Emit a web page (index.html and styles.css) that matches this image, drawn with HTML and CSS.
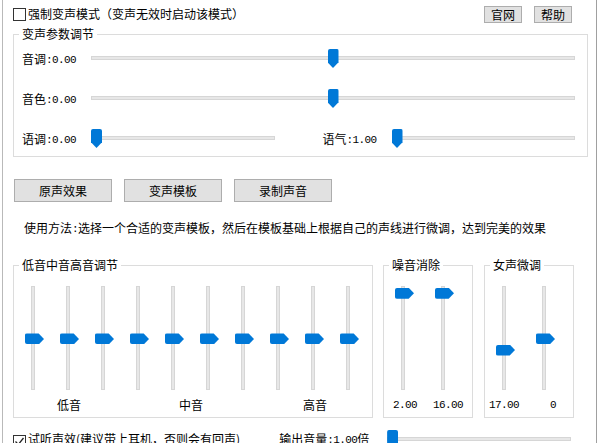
FILE: index.html
```html
<!DOCTYPE html>
<html lang="zh-CN">
<head>
<meta charset="utf-8">
<title>变声器</title>
<link rel="stylesheet" href="styles.css">
</head>
<body>
<div class="frame">
  <div class="toprow">
    <span class="check"></span>
    <span class="linetext">强制变声模式（变声无效时启动该模式）</span>
    <span class="spacer"></span>
    <button class="btn small">官网</button>
    <button class="btn small">帮助</button>
  </div>

  <div class="group params">
    <div class="title">变声参数调节</div>
    <div class="rows">
      <div class="prow">
        <span class="plabel">音调<span class="num">:0.00</span></span>
        <div class="hslider"><div class="htrack"></div><div class="hthumb" style="--v:.5"></div></div>
      </div>
      <div class="prow">
        <span class="plabel">音色<span class="num">:0.00</span></span>
        <div class="hslider"><div class="htrack"></div><div class="hthumb" style="--v:.5"></div></div>
      </div>
      <div class="prow split">
        <div class="half">
          <span class="plabel">语调<span class="num">:0.00</span></span>
          <div class="hslider"><div class="htrack"></div><div class="hthumb" style="--v:0"></div></div>
        </div>
        <div class="half">
          <span class="plabel">语气<span class="num">:1.00</span></span>
          <div class="hslider"><div class="htrack"></div><div class="hthumb" style="--v:0"></div></div>
        </div>
      </div>
    </div>
  </div>

  <div class="actions">
    <button class="btn big">原声效果</button>
    <button class="btn big">变声模板</button>
    <button class="btn big">录制声音</button>
  </div>

  <p class="usage">使用方法<span class="num">:</span>选择一个合适的变声模板，然后在模板基础上根据自己的声线进行微调，达到完美的效果</p>

  <div class="lower">
    <div class="group eq">
      <div class="title">低音中音高音调节</div>
      <div class="vrow">
        <div class="vslider"><div class="vtrack"></div><div class="vthumb" style="--v:.51"></div></div>
        <div class="vslider"><div class="vtrack"></div><div class="vthumb" style="--v:.51"></div></div>
        <div class="vslider"><div class="vtrack"></div><div class="vthumb" style="--v:.51"></div></div>
        <div class="vslider"><div class="vtrack"></div><div class="vthumb" style="--v:.51"></div></div>
        <div class="vslider"><div class="vtrack"></div><div class="vthumb" style="--v:.51"></div></div>
        <div class="vslider"><div class="vtrack"></div><div class="vthumb" style="--v:.51"></div></div>
        <div class="vslider"><div class="vtrack"></div><div class="vthumb" style="--v:.51"></div></div>
        <div class="vslider"><div class="vtrack"></div><div class="vthumb" style="--v:.51"></div></div>
        <div class="vslider"><div class="vtrack"></div><div class="vthumb" style="--v:.51"></div></div>
        <div class="vslider"><div class="vtrack"></div><div class="vthumb" style="--v:.51"></div></div>
      </div>
      <div class="vlabels">
        <span class="eq-low">低音</span>
        <span class="eq-mid">中音</span>
        <span class="eq-high">高音</span>
      </div>
    </div>

    <div class="group small-group noise">
      <div class="title">噪音消除</div>
      <div class="vrow pair">
        <div class="vslider"><div class="vtrack"></div><div class="vthumb" style="--v:.02"></div></div>
        <div class="vslider"><div class="vtrack"></div><div class="vthumb" style="--v:.02"></div></div>
      </div>
      <div class="vlabels">
        <span class="num n-a">2.00</span>
        <span class="num n-b">16.00</span>
      </div>
    </div>

    <div class="group small-group female">
      <div class="title">女声微调</div>
      <div class="vrow pair">
        <div class="vslider"><div class="vtrack"></div><div class="vthumb" style="--v:.63"></div></div>
        <div class="vslider"><div class="vtrack"></div><div class="vthumb" style="--v:.51"></div></div>
      </div>
      <div class="vlabels">
        <span class="num f-a">17.00</span>
        <span class="num f-b">0</span>
      </div>
    </div>
  </div>

  <div class="bottomrow">
    <span class="check checked"><svg viewBox="0 0 11 11" width="11" height="11"><path d="M1.5 5.5 L4.3 8.5 L9.5 2" fill="none" stroke="#222" stroke-width="1.3"/></svg></span>
    <span class="linetext">试听声效(建议带上耳机，否则会有回声)</span>
    <span class="outlabel">输出音量<span class="num">:1.00</span>倍</span>
    <div class="hslider out"><div class="htrack"></div><div class="hthumb" style="--v:0"></div></div>
  </div>
</div>
</body>
</html>
```

FILE: styles.css
```css
* { box-sizing: border-box; }

html, body {
  margin: 0;
  height: 100%;
  overflow: hidden;
  background: #fff;
}

body {
  font-family: "Noto Sans CJK SC", "Noto Sans", sans-serif;
  font-size: 12px;
  line-height: 16px;
  color: #000;
}

.num {
  font-family: "Liberation Mono", "DejaVu Sans Mono", monospace;
  font-size: 11px;
  letter-spacing: -0.6px;
  vertical-align: 1px;
}

.frame {
  margin-left: 2px;
  width: 595px;
  height: 443px;
  border-left: 1px solid #b9b9b9;
  border-right: 1px solid #a0a0a0;
  padding-top: 4px;
}

/* top row */
.toprow {
  display: flex;
  align-items: flex-start;
  height: 20px;
  padding: 0 24px 0 10px;
}

.check {
  flex: none;
  width: 13px;
  height: 13px;
  margin-top: 4px;
  border: 1px solid #333;
  background: #fff;
  display: flex;
  align-items: center;
  justify-content: center;
}

.checked { margin-top: 5px; }

.linetext {
  margin-left: 2px;
  line-height: 20px;
  white-space: nowrap;
}

.spacer { flex: 1; }

.btn {
  font: inherit;
  color: #000;
  background: #e1e1e1;
  border: 1px solid #adadad;
  padding: 0;
  border-radius: 0;
}

.btn.small {
  width: 38px;
  height: 17px;
  line-height: 15px;
  margin-top: 2px;
  margin-left: 12px;
}

/* group boxes */
.group {
  border: 1px solid #dcdcdc;
  padding-left: 8px;
}

.title {
  display: block;
  width: max-content;
  margin: -9px 0 0 -3px;
  padding: 0 3px;
  background: #fff;
  line-height: 16px;
}

.params {
  margin: 10px 0 0 10px;
  width: 575px;
  padding-right: 12px;
  padding-bottom: 7px;
}

.rows {
  display: flex;
  flex-direction: column;
  gap: 20px;
  padding-top: 7px;
}

.prow {
  display: flex;
  height: 20px;
}

.split {
  display: grid;
  grid-template-columns: 1fr 1fr;
  gap: 48px;
}

.half { display: flex; }

.plabel {
  flex: none;
  width: 69px;
  line-height: 20px;
  white-space: nowrap;
}

/* horizontal slider */
.hslider {
  position: relative;
  flex: 1;
  height: 20px;
}

.htrack {
  margin-top: 7px;
  height: 4px;
  background: #e7e7e7;
  border: 1px solid #d6d6d6;
}

.hthumb {
  position: absolute;
  top: 0;
  left: calc(var(--v) * (100% - 11px));
  width: 11px;
  height: 19px;
  background: #0078d7;
  border-radius: 2px 2px 0 0;
  clip-path: polygon(0 0, 100% 0, 100% 70%, 50% 100%, 0 70%);
}

/* action buttons */
.actions {
  display: flex;
  gap: 12px;
  margin: 22px 0 0 11px;
}

.btn.big {
  width: 98px;
  height: 23px;
  line-height: 21px;
}

.usage {
  margin: 18px 0 0 21px;
  line-height: 16px;
  white-space: nowrap;
}

/* lower groups */
.lower {
  display: flex;
  align-items: flex-start;
  margin: 28px 0 0 10px;
}

.eq {
  width: 360px;
  padding-bottom: 4px;
}

.small-group {
  width: 90px;
  padding-bottom: 4px;
}

.noise { margin-left: 10px; }
.female { margin-left: 11px; }

.vrow {
  display: flex;
  gap: 16px;
  padding-left: 3px;
  margin-top: 13px;
}

.vrow.pair { gap: 21px; }

.vslider {
  position: relative;
  width: 19px;
  height: 104px;
}

.vtrack {
  margin-left: 6px;
  width: 4px;
  height: 100%;
  background: #e7e7e7;
  border: 1px solid #d6d6d6;
}

.vthumb {
  position: absolute;
  left: 0;
  top: calc(var(--v) * (100% - 11px));
  width: 19px;
  height: 11px;
  background: #0078d7;
  border-radius: 2px 0 0 2px;
  clip-path: polygon(0 0, 72% 0, 100% 50%, 72% 100%, 0 100%);
}

.vlabels {
  display: flex;
  height: 16px;
  line-height: 16px;
  margin-top: 7px;
  white-space: nowrap;
}

.vlabels .num { vertical-align: baseline; }

.eq-low { margin-left: 35px; }
.eq-mid { margin-left: 98px; }
.eq-high { margin-left: 100px; }

.n-a { margin-left: 1px; }
.n-b { margin-left: 16px; }
.f-a { margin-left: -4px; }
.f-b { margin-left: 31px; }

/* bottom row */
.bottomrow {
  display: flex;
  align-items: flex-start;
  height: 20px;
  margin: 12px 0 0 10px;
}

.bottomrow .linetext,
.bottomrow .outlabel { line-height: 18px; }

.outlabel {
  flex: none;
  width: 108px;
  margin-left: 39px;
  line-height: 20px;
  white-space: nowrap;
}

.hslider.out {
  flex: none;
  width: 184px;
}
```
